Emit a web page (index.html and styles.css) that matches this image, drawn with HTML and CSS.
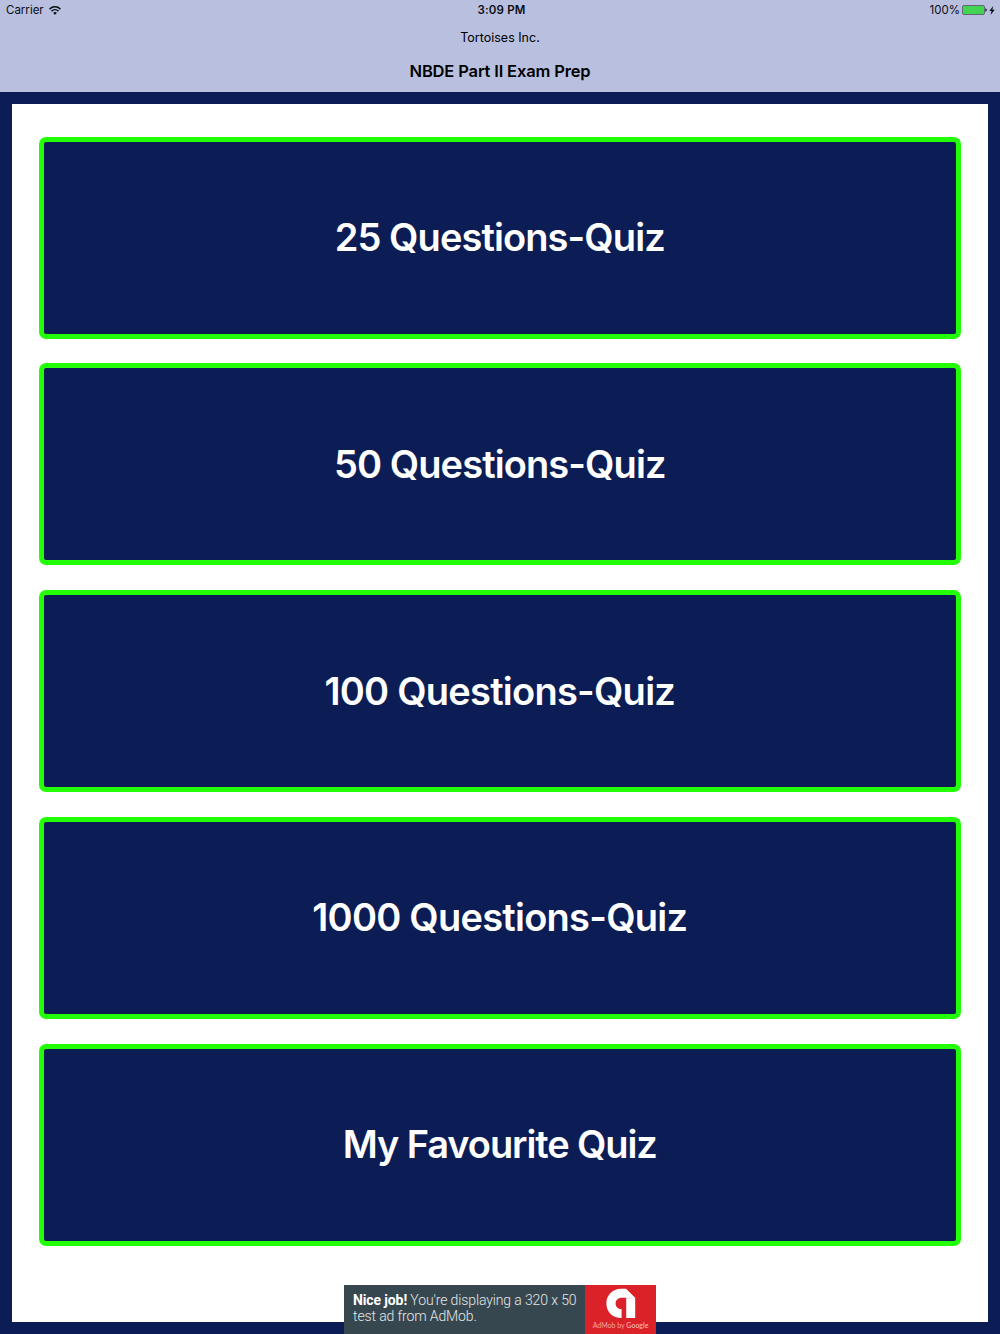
FILE: index.html
```html
<!DOCTYPE html>
<html lang="en">
<head>
    <meta charset="UTF-8">
    <meta name="viewport" content="width=device-width, initial-scale=1">
    <title>NBDE Part II Exam Prep</title>
    <link rel="stylesheet" href="styles.css">
</head>
<body>
    <header class="header">
        <div class="status-bar">
            <div class="status-left">
                <span>Carrier</span>
                <svg class="wifi" viewBox="0 0 12 9" width="12" height="9">
                    <path d="M0.6 3.1a7.6 7.6 0 0 1 10.8 0M2.5 5.2a5 5 0 0 1 7 0" fill="none" stroke="#0b0d14" stroke-width="1.5"/>
                    <path d="M6 8.8L4.1 6.9a2.7 2.7 0 0 1 3.8 0z" fill="#0b0d14"/>
                </svg>
            </div>
            <div class="status-time">3:09 PM</div>
            <div class="status-right">
                <span>100%</span>
                <svg class="battery" viewBox="0 0 25 10" width="25" height="10">
                    <rect x="0.5" y="0.5" width="22" height="9" rx="1.5" fill="#43d551" stroke="#626775"/>
                    <path d="M23.4 3.3q1.4 0.4 1.4 1.7t-1.4 1.7z" fill="#0b0d14"/>
                </svg>
                <svg class="bolt" viewBox="0 0 6 9" width="6" height="9">
                    <path d="M4.2 0L0.3 5h2.2L1.6 9 5.7 3.8H3.4z" fill="#0b0d14"/>
                </svg>
            </div>
        </div>
        <div class="company">Tortoises Inc.</div>
        <h1>NBDE Part II Exam Prep</h1>
    </header>

    <main class="container">
        <button class="btn">25 Questions-Quiz</button>
        <button class="btn">50 Questions-Quiz</button>
        <button class="btn btn-long">100 Questions-Quiz</button>
        <button class="btn btn-long">1000 Questions-Quiz</button>
        <button class="btn btn-favourite">My Favourite Quiz</button>
    </main>

    <div class="ad">
        <p class="ad-text"><b>Nice job!</b> You're displaying a 320 x 50<br>test ad from AdMob.</p>
        <div class="ad-logo">
            <svg viewBox="0 0 30 31" width="30" height="31">
                <path d="M15 0.8H20L29.2 9.8V30H20.2V9.8H16C11.8 9.8 9.6 12.5 9.6 15.6C9.6 19 12 21.2 15.6 21.2V30C6.5 30 0.4 23.6 0.4 15.4C0.4 7.2 6.5 0.8 15 0.8z" fill="#fff"/>
                <path d="M20.2 9.8h9L20.2 10.8z" fill="#d0d0d0"/>
            </svg>
            <span>AdMob by <b>Google</b></span>
        </div>
    </div>
</body>
</html>
```

FILE: styles.css
```css
* {
    box-sizing: border-box;
}

html, body {
    height: 100%;
    margin: 0;
}

body {
    display: flex;
    flex-direction: column;
    background-color: #0c1d55;
    color: #000;
    font-family: Inter, sans-serif;
    overflow: hidden;
}

.header {
    height: 92px;
    background-color: #b9bfdf;
    text-align: center;
}

.status-bar {
    display: grid;
    grid-template-columns: 1fr auto 1fr;
    align-items: center;
    height: 20px;
    padding: 0 5px 0 6px;
    font-size: 11.5px;
    line-height: 20px;
    color: #0b0d14;
}

.status-left,
.status-right {
    display: flex;
    align-items: center;
}

.status-left {
    gap: 5px;
}

.status-right {
    justify-content: flex-end;
    gap: 2px;
}

.status-time {
    padding-left: 2px;
    font-weight: 600;
    letter-spacing: 0.2px;
}

.company {
    margin-top: 10px;
    font-size: 12.5px;
    line-height: 16px;
}

.header h1 {
    margin: 15px 0 0;
    font-size: 16.5px;
    font-weight: 600;
    line-height: 20px;
    letter-spacing: -0.15px;
}

.container {
    display: flex;
    flex-direction: column;
    gap: 24.75px;
    height: 1218px;
    margin: 12px 12px 0;
    padding: 32.7px 27.5px 0 27px;
    background-color: #fff;
}

.btn {
    flex: none;
    height: 202px;
    padding: 0 0 1px;
    border: 5px solid #22ff06;
    border-radius: 7px;
    background-color: #0c1d55;
    color: #fff;
    font-family: inherit;
    font-size: 38px;
    font-weight: 600;
    letter-spacing: -0.9px;
}

.btn-long {
    letter-spacing: -0.75px;
}

.btn-favourite {
    letter-spacing: -1.1px;
}

/* banner sits over the bottom edge of the panel */
.ad {
    position: absolute;
    left: 344px;
    bottom: 0;
    display: flex;
    width: 312px;
    height: 49px;
}

.ad-text {
    flex: 1;
    margin: 0;
    padding: 7px 0 0 9px;
    background-color: #37474f;
    color: #e4e7e8;
    font-family: Roboto, sans-serif;
    font-size: 14px;
    font-weight: 300;
    line-height: 16px;
    letter-spacing: -0.12px;
    white-space: nowrap;
}

.ad-text b {
    color: #fff;
    font-weight: 700;
}

.ad-logo {
    display: flex;
    flex-direction: column;
    align-items: center;
    width: 71px;
    padding-top: 3px;
    background-color: #dc2229;
}

.ad-logo span {
    margin-top: 2px;
    color: #f3a5a8;
    font-family: Lato, sans-serif;
    font-size: 7px;
    line-height: 9px;
    white-space: nowrap;
}

.ad-logo b {
    font-weight: 400;
    color: #f8c4c6;
}
```
